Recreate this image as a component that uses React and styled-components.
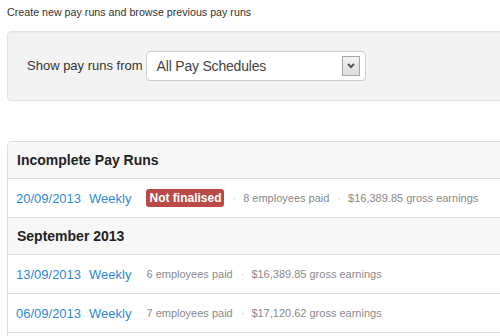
import React from "react";
import styled, { createGlobalStyle } from "styled-components";

const GlobalStyle = createGlobalStyle`
  html, body {
    margin: 0;
    padding: 0;
    background: #fff;
    overflow: hidden;
  }
  body {
    font-family: "Liberation Sans", Arial, sans-serif;
    color: #333;
  }
`;

const Page = styled.div`
  width: 940px;
  padding: 5px 0 0 7px;
`;

const Intro = styled.p`
  margin: 0;
  font-size: 10.7px;
  line-height: 14px;
  color: #333;
`;

const Well = styled.div`
  margin-top: 12px;
  height: 68px;
  display: flex;
  align-items: center;
  padding-left: 19px;
  background: #f3f3f3;
  border: 1px solid #e3e3e3;
  border-radius: 4px;
  box-shadow: inset 0 1px 1px rgba(0, 0, 0, 0.04);
`;

const FilterLabel = styled.label`
  font-size: 13px;
  color: #333;
  margin-right: 3px;
  margin-top: -2px;
`;

const SelectBox = styled.div`
  width: 220px;
  height: 30px;
  display: flex;
  align-items: center;
  justify-content: space-between;
  padding: 0 5px 0 10px;
  box-sizing: border-box;
  background: #fff;
  border: 1px solid #ccc;
  border-radius: 4px;
  font-size: 14px;
  letter-spacing: -0.2px;
  color: #444;
`;

const SelectButton = styled.span`
  width: 16px;
  height: 18px;
  display: flex;
  align-items: center;
  justify-content: center;
  background: linear-gradient(#f2f2f2, #dcdcdc);
  border: 1px solid #a6a6a6;
`;

const Panel = styled.div`
  margin-top: 40px;
  border: 1px solid #ddd;
  border-radius: 4px;
  overflow: hidden;
`;

const GroupHeading = styled.div`
  height: 36px;
  display: flex;
  align-items: center;
  padding-left: 9px;
  background: #f7f7f7;
  border-top: ${(p) => (p.$first ? "none" : "1px solid #ddd")};
  font-size: 14px;
  font-weight: bold;
  color: #222;
`;

const RunRow = styled.div`
  height: 38px;
  display: flex;
  align-items: center;
  padding-left: 8px;
  border-top: 1px solid #ddd;
`;

const RunLink = styled.a`
  font-size: 13px;
  color: #2f89d4;
  text-decoration: none;
  margin-right: ${(p) => p.$gap}px;
`;

const Badge = styled.span`
  display: inline-block;
  background: #b94a48;
  color: #fff;
  font-size: 12px;
  font-weight: bold;
  line-height: 14px;
  padding: 2px 3px;
  border-radius: 3px;
`;

const Meta = styled.span`
  font-size: 11px;
  color: #8a8a8a;
`;

const Dot = styled.span`
  font-size: 11px;
  color: #c4c4c4;
  margin: 0 7px 0 8px;
`;

function Chevron() {
  return (
    <svg width="8" height="6" viewBox="0 0 8 6">
      <path d="M1 1 L4 4 L7 1" fill="none" stroke="#555" strokeWidth="2" />
    </svg>
  );
}

const incomplete = [
  { date: "20/09/2013", freq: "Weekly", status: "Not finalised", paid: 8, gross: "$16,389.85" },
];

const september = [
  { date: "13/09/2013", freq: "Weekly", paid: 6, gross: "$16,389.85" },
  { date: "06/09/2013", freq: "Weekly", paid: 7, gross: "$17,120.62" },
  { date: "30/08/2013", freq: "Weekly", paid: 7, gross: "$17,120.62" },
];

function Run({ run }) {
  return (
    <RunRow>
      <RunLink href="#" $gap={8}>{run.date}</RunLink>
      <RunLink href="#" $gap={15}>{run.freq}</RunLink>
      {run.status && (
        <>
          <Badge>{run.status}</Badge>
          <Dot>·</Dot>
        </>
      )}
      <Meta>{run.paid} employees paid</Meta>
      <Dot>·</Dot>
      <Meta>{run.gross} gross earnings</Meta>
    </RunRow>
  );
}

export default function App() {
  return (
    <>
      <GlobalStyle />
      <Page>
        <Intro>Create new pay runs and browse previous pay runs</Intro>
        <Well>
          <FilterLabel>Show pay runs from</FilterLabel>
          <SelectBox>
            <span>All Pay Schedules</span>
            <SelectButton>
              <Chevron />
            </SelectButton>
          </SelectBox>
        </Well>
        <Panel>
          <GroupHeading $first>Incomplete Pay Runs</GroupHeading>
          {incomplete.map((r) => (
            <Run key={r.date} run={r} />
          ))}
          <GroupHeading>September 2013</GroupHeading>
          {september.map((r) => (
            <Run key={r.date} run={r} />
          ))}
        </Panel>
      </Page>
    </>
  );
}
